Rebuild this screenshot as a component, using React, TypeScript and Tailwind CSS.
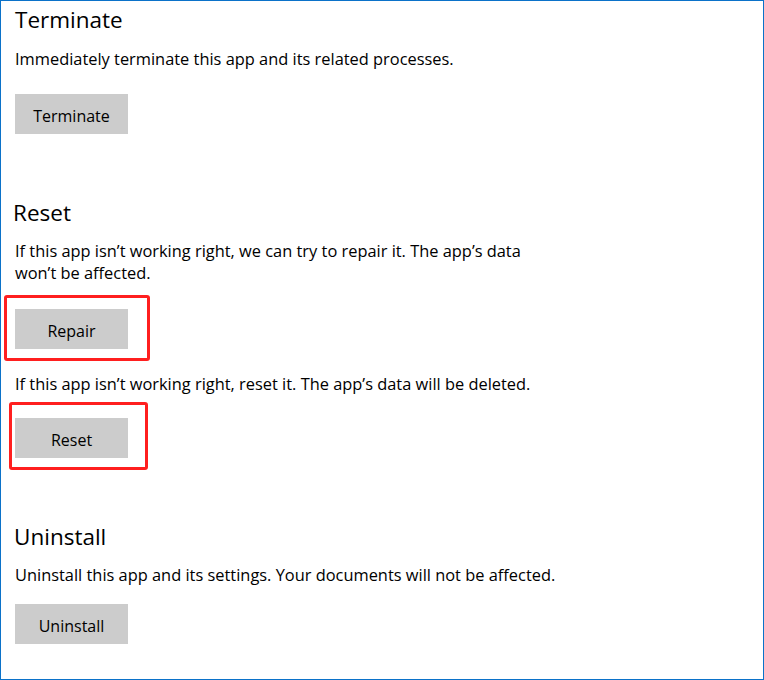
const font = { fontFamily: '"Open Sans", "Noto Sans", sans-serif' }

const Heading = ({ children, className = '' }: { children: string; className?: string }) => (
  <h2 className={`text-[22.5px] leading-[32px] font-normal text-black ${className}`}>{children}</h2>
)

const Desc = ({ children, className = '' }: { children: string; className?: string }) => (
  <p className={`text-[16.4px] leading-[22px] text-black ${className}`}>{children}</p>
)

const Button = ({ label }: { label: string }) => (
  <button className="h-[40px] w-[113px] bg-[#cccccc] pt-[4px] text-[16px] text-black">{label}</button>
)

// red annotation frame around a button
const Marked = ({ children, frame }: { children: React.ReactNode; frame: string }) => (
  <div className="relative w-fit">
    {children}
    <div className={`pointer-events-none absolute rounded-[3px] border-[3px] border-[#ff1f1f] ${frame}`} />
  </div>
)

export default function App() {
  return (
    <div
      className="relative h-[680px] w-[764px] overflow-hidden border border-[#0b72c9] bg-white pl-[14px] pt-[3px]"
      style={font}
    >
      <section>
        <Heading>Terminate</Heading>
        <Desc className="mt-[12px]">Immediately terminate this app and its related processes.</Desc>
        <div className="mt-[24px]">
          <Button label="Terminate" />
        </div>
      </section>

      <section className="mt-[63px]">
        <Heading className="-ml-[2px]">Reset</Heading>
        <Desc className="mt-[11px] max-w-[540px]">
          If this app isn’t working right, we can try to repair it. The app’s data won’t be affected.
        </Desc>
        <div className="mt-[25px]">
          <Marked frame="-left-[11px] -top-[14px] -right-[22px] -bottom-[12px]">
            <Button label="Repair" />
          </Marked>
        </div>
        <Desc className="mt-[24px]">If this app isn’t working right, reset it. The app’s data will be deleted.</Desc>
        <div className="mt-[23px]">
          <Marked frame="-left-[6px] -top-[16px] -right-[20px] -bottom-[12px]">
            <Button label="Reset" />
          </Marked>
        </div>
      </section>

      <section className="mt-[63px]">
        <Heading className="-ml-[1px]">Uninstall</Heading>
        <Desc className="mt-[11px]">Uninstall this app and its settings. Your documents will not be affected.</Desc>
        <div className="mt-[18px]">
          <Button label="Uninstall" />
        </div>
      </section>
    </div>
  )
}
